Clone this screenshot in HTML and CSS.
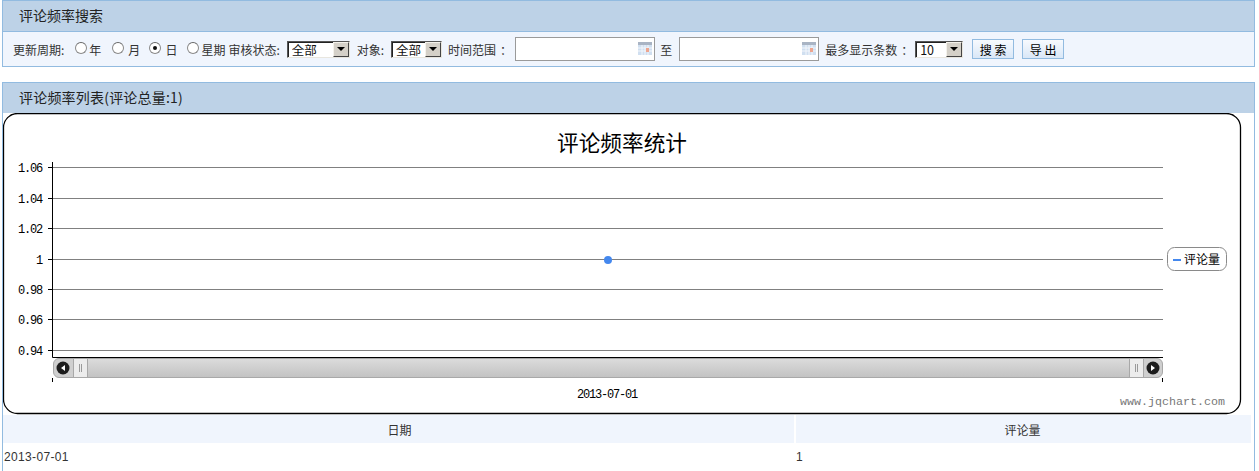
FILE: index.html
```html
<!DOCTYPE html>
<html lang="zh">
<head>
<meta charset="utf-8">
<title>评论频率</title>
<link rel="stylesheet" href="styles.css">
</head>
<body>
<section class="panel search-panel">
  <h2 class="panel-title">评论频率搜索</h2>
  <form class="search-bar">
    <span class="label">更新周期:</span>
    <label class="radio r-year"><input type="radio" name="cycle">年</label>
    <label class="radio r-month"><input type="radio" name="cycle">月</label>
    <label class="radio r-day"><input type="radio" name="cycle" checked>日</label>
    <label class="radio r-week"><input type="radio" name="cycle">星期</label>
    <span class="label l-status">审核状态:</span>
    <span class="select s-status"><select><option>全部</option></select><i class="arrow"></i></span>
    <span class="label l-object">对象:</span>
    <span class="select s-object"><select><option>全部</option></select><i class="arrow"></i></span>
    <span class="label l-range">时间范围<span class="fw-colon">：</span></span>
    <span class="date d-from"><input type="text">
      <svg class="cal" width="14" height="13" viewBox="0 0 14 13"><rect width="14" height="13" fill="#d0dff0"/><rect width="14" height="3" fill="#a9b4c4"/><path d="M0 6h14M0 9h14M4 3v10M7 3v10M10 3v10" stroke="#f3f6fb"/><rect x="8" y="6" width="3" height="4" fill="#eda58f"/></svg>
    </span>
    <span class="label l-to">至</span>
    <span class="date d-to"><input type="text">
      <svg class="cal" width="14" height="13" viewBox="0 0 14 13"><rect width="14" height="13" fill="#d0dff0"/><rect width="14" height="3" fill="#a9b4c4"/><path d="M0 6h14M0 9h14M4 3v10M7 3v10M10 3v10" stroke="#f3f6fb"/><rect x="8" y="6" width="3" height="4" fill="#eda58f"/></svg>
    </span>
    <span class="label l-max">最多显示条数<span class="fw-colon">：</span></span>
    <span class="select s-max"><select><option>10</option></select><i class="arrow"></i></span>
    <button type="button" class="btn b-search">搜 索</button>
    <button type="button" class="btn b-export">导 出</button>
  </form>
</section>

<section class="panel list-panel">
  <h2 class="panel-title">评论频率列表(评论总量:1)</h2>
  <div class="chart">
    <svg class="chart-svg" width="1239" height="302" viewBox="3 113 1239 302">
      <defs>
        <linearGradient id="track" x1="0" y1="0" x2="0" y2="1"><stop offset="0" stop-color="#dcdcdc"/><stop offset="1" stop-color="#c2c2c2"/></linearGradient>
      </defs>
      <rect class="frame" x="3.5" y="113.5" width="1237" height="300" rx="14"/>
      <text class="title" x="622" y="151" text-anchor="middle">评论频率统计</text>
      <g class="grid">
        <path d="M48 167.5H1163M48 198.5H1163M48 228.5H1163M48 259.5H1163M48 289.5H1163M48 319.5H1163M48 350.5H1163"/>
      </g>
      <path class="ticks" d="M48 167.5H52M48 198.5H52M48 228.5H52M48 259.5H52M48 289.5H52M48 319.5H52M48 350.5H52"/>
      <path class="axis" d="M52.5 162V357.5H1163M52.5 378V382M1162.5 378V382"/>
      <text class="tick" x="42" y="172" text-anchor="end">1.06</text>
      <text class="tick" x="42" y="203" text-anchor="end">1.04</text>
      <text class="tick" x="42" y="233" text-anchor="end">1.02</text>
      <text class="tick" x="42" y="264" text-anchor="end">1</text>
      <text class="tick" x="42" y="294" text-anchor="end">0.98</text>
      <text class="tick" x="42" y="324" text-anchor="end">0.96</text>
      <text class="tick" x="42" y="355" text-anchor="end">0.94</text>
      <circle class="dot" cx="608" cy="260" r="4"/>

      <rect class="sb-track" x="87.5" y="358.5" width="1042" height="19" fill="url(#track)"/>
      <path class="sb-btn" d="M73.5 358.5H59a5.500 5.500 0 0 0-5.500 5.500v8a5.500 5.500 0 0 0 5.500 5.500H73.500z"/>
      <path class="sb-btn" d="M1143.500 358.500H1157a5.500 5.500 0 0 1 5.500 5.500v8a5.500 5.500 0 0 1-5.500 5.500H1143.500z"/>
      <rect class="sb-handle" x="73.500" y="358.500" width="14" height="19"/>
      <rect class="sb-handle" x="1129.500" y="358.500" width="14" height="19"/>
      <path class="sb-grip" d="M79.500 364v8M81.500 364v8M1135.500 364v8M1137.500 364v8"/>
      <circle class="sb-round" cx="63" cy="368" r="6.500"/>
      <circle class="sb-round" cx="1153" cy="368" r="6.500"/>
      <path class="sb-tri" d="M65 365v6l-4-3zM1151 365v6l4-3z"/>

      <text class="tick" x="607" y="398" text-anchor="middle">2013-07-01</text>
      <text class="credit" x="1225" y="405" text-anchor="end">www.jqchart.com</text>

      <rect class="legend" x="1167.500" y="247.500" width="59" height="23" rx="7"/>
      <path class="legend-key" d="M1173 260H1181"/>
      <text class="legend-text" x="1184" y="264">评论量</text>
    </svg>
  </div>
  <table class="data">
    <thead>
      <tr><th class="col-date">日期</th><th class="col-count">评论量</th></tr>
    </thead>
    <tbody>
      <tr><td>2013-07-01</td><td>1</td></tr>
    </tbody>
  </table>
</section>
</body>
</html>
```

FILE: styles.css
```css
html { overflow: hidden; }
body {
  margin: 0;
  padding: 0 4px 0 2px;
  background: #fff;
  color: #333;
  font: 12px "Noto Sans CJK SC", "Liberation Sans", sans-serif;
}
.panel {
  border: 1px solid #92bbe0;
}
.search-panel { height: 67px; box-sizing: border-box; }
.list-panel { margin-top: 15px; border-bottom: 0; }
.panel-title {
  margin: 0;
  height: 30px;
  padding-left: 16px;
  background: #bdd2e7;
  font-size: 14px;
  font-weight: 400;
  line-height: 29px;
  color: #222;
}
.list-panel .panel-title { letter-spacing: 0.200px; }
.search-bar {
  display: flex;
  align-items: center;
  height: 34px;
  padding-left: 10px;
  background: #f0f5fd;
  border-top: 1px solid #92bbe0;
}
.label { white-space: nowrap; }
.fw-colon { margin: 0 -4px 0 4px; }
.radio { display: flex; align-items: center; white-space: nowrap; }
.radio input {
  appearance: none;
  width: 12px;
  height: 12px;
  margin: -3px 2px 0 0;
  border: 1px solid #8a8a8a;
  border-top-color: #666;
  border-radius: 50%;
  background: #fff;
  display: grid;
  place-items: center;
}
.radio input:checked::before {
  content: "";
  width: 4px;
  height: 4px;
  border-radius: 50%;
  background: #111;
}
.r-year { margin-left: 11px; }
.r-month { margin-left: 11px; }
.r-month input { margin-right: 4px; }
.r-day { margin-left: 9px; }
.r-day input { margin-right: 4px; }
.r-week { margin-left: 10px; }
.l-status { margin-left: 3px; }
.s-status { margin-left: 7px; width: 63px; }
.l-object { margin-left: 7px; }
.s-object { margin-left: 7px; width: 51px; }
.l-range { margin-left: 6px; }
.d-from { margin-left: 7px; }
.l-to { margin-left: 5px; }
.d-to { margin-left: 7px; }
.l-max { margin-left: 6px; }
.s-max { margin-left: 6px; width: 48px; }
.b-search { margin-left: 9px; }
.b-export { margin-left: 8px; }

.select {
  display: flex;
  box-sizing: border-box;
  height: 17px;
  background: #fff;
  border: 1px solid;
  border-color: #555 #e8e6df #e8e6df #555;
  box-shadow: inset 1px 1px 0 #222;
}
.select select {
  appearance: none;
  flex: 1;
  min-width: 0;
  border: 0;
  padding: 0 0 0 4px;
  background: transparent;
  color: #111;
  font: 12.500px "Noto Sans CJK SC", "Liberation Sans", sans-serif;
  line-height: 15px;
}
.arrow {
  flex: none;
  width: 16px;
  background: #d4d0c8;
  border: 1px solid;
  border-color: #f4f2ec #444 #444 #f4f2ec;
  box-sizing: border-box;
  display: grid;
  place-items: center;
}
.arrow::before {
  content: "";
  border: 4px solid transparent;
  border-top: 4px solid #000;
  border-bottom: 0;
}
.date {
  display: flex;
  align-items: center;
  box-sizing: border-box;
  width: 140px;
  height: 24px;
  padding-right: 2px;
  background: #fff;
  border: 1px solid #9a9a9a;
}
.date input {
  flex: 1;
  min-width: 0;
  border: 0;
  padding: 0;
  background: transparent;
}
.cal { flex: none; margin-top: -1px; }
.btn {
  box-sizing: border-box;
  width: 42px;
  height: 20px;
  padding: 0;
  border: 1px solid #92bbe0;
  background: linear-gradient(#f7fafe, #d9e7f7);
  color: #000;
  font: 12px "Noto Sans CJK SC", "Liberation Sans", sans-serif;
}

.chart { height: 302px; }
.chart-svg { display: block; }
.frame { fill: #fff; stroke: #000; stroke-width: 1.300; }
.title { font: 21.670px "Noto Sans CJK SC", sans-serif; fill: #000; }
.grid path { stroke: #808080; fill: none; }
.ticks, .axis { stroke: #000; fill: none; }
.tick { font: 12px "Liberation Mono", monospace; letter-spacing: -1.200px; fill: #000; }
.dot { fill: #4488ee; }
.sb-track { stroke: #a8a8a8; }
.sb-btn { fill: #cfcfcf; stroke: #a8a8a8; }
.sb-handle { fill: #ececec; stroke: #a8a8a8; }
.sb-grip { stroke: #9a9a9a; fill: none; }
.sb-round { fill: #1c1c1c; }
.sb-tri { fill: #fff; }
.credit { font: 11.670px "Liberation Mono", monospace; fill: #777; }
.legend { fill: #fff; stroke: #8a8a8a; }
.legend-key { stroke: #4488ee; stroke-width: 2; fill: none; }
.legend-text { font: 12px "Noto Sans CJK SC", sans-serif; fill: #000; }

.data {
  width: 1248px;
  margin-top: 0;
  border-collapse: collapse;
  table-layout: fixed;
}
.data th {
  height: 28px;
  padding: 0;
  background: #f0f5fd;
  border-right: 2px solid #fff;
  font-weight: 400;
  color: #333;
}
.data th:last-child { border-right: 0; }
.col-date { width: 789px; }
.data .col-date { padding-left: 2px; }
.data .col-count { padding-right: 2px; }
.data td {
  height: 28px;
  padding: 0 0 0 1px;
  color: #333;
  font-family: "Liberation Sans", sans-serif;
  letter-spacing: 0.350px;
}
```
